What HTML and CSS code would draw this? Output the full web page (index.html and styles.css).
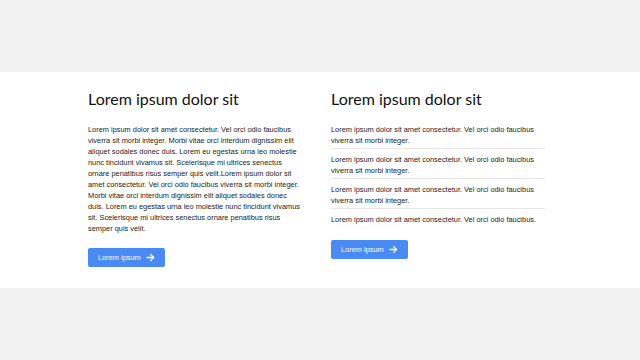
FILE: index.html
```html
<!DOCTYPE html>
<html lang="en">
<head>
  <meta charset="UTF-8">
  <meta name="viewport" content="width=device-width, initial-scale=1.0">
  <title>Lorem ipsum</title>
  <link rel="stylesheet" href="styles.css">
</head>
<body>
  <section class="band">
    <div class="columns">
      <div class="column">
        <h2>Lorem ipsum dolor sit</h2>
        <p class="text">Lorem ipsum dolor sit amet consectetur. Vel orci odio faucibus viverra sit morbi integer. Morbi vitae orci interdum dignissim elit aliquet sodales donec duis. Lorem eu egestas urna leo molestie nunc tincidunt vivamus sit. Scelerisque mi ultrices senectus ornare penatibus risus semper quis velit.Lorem ipsum dolor sit amet consectetur. Vel orci odio faucibus viverra sit morbi integer. Morbi vitae orci interdum dignissim elit aliquet sodales donec duis. Lorem eu egestas urna leo molestie nunc tincidunt vivamus sit. Scelerisque mi ultrices senectus ornare penatibus risus semper quis velit.</p>
        <a href="#" class="button">Lorem ipsum
          <svg width="9" height="9" viewBox="0 0 10 10"><path d="M1 5h7.5M5 1.5L8.5 5 5 8.5" fill="none" stroke="#fff" stroke-width="1.4" stroke-linecap="round" stroke-linejoin="round"/></svg>
        </a>
      </div>
      <div class="column">
        <h2>Lorem ipsum dolor sit</h2>
        <ul class="list">
          <li>Lorem ipsum dolor sit amet consectetur. Vel orci odio faucibus viverra sit morbi integer.</li>
          <li>Lorem ipsum dolor sit amet consectetur. Vel orci odio faucibus viverra sit morbi integer.</li>
          <li>Lorem ipsum dolor sit amet consectetur. Vel orci odio faucibus viverra sit morbi integer.</li>
          <li>Lorem ipsum dolor sit amet consectetur. Vel orci odio faucibus.</li>
        </ul>
        <a href="#" class="button">Lorem ipsum
          <svg width="9" height="9" viewBox="0 0 10 10"><path d="M1 5h7.5M5 1.5L8.5 5 5 8.5" fill="none" stroke="#fff" stroke-width="1.4" stroke-linecap="round" stroke-linejoin="round"/></svg>
        </a>
      </div>
    </div>
  </section>
</body>
</html>
```

FILE: styles.css
```css
* {
  box-sizing: border-box;
  margin: 0;
  padding: 0;
}

body {
  font-family: "Liberation Sans", Arial, sans-serif;
  background-color: #f2f2f2;
  color: #212121;
  padding-top: 72px;
}

.band {
  background-color: #fff;
  height: 216px;
  padding: 16px 0 0 88px;
}

.columns {
  display: grid;
  grid-template-columns: 213px 214px;
  column-gap: 30px;
}

h2 {
  font-family: Lato, sans-serif;
  font-size: 16px;
  font-weight: 400;
  line-height: 22px;
  color: #111;
  margin-bottom: 13.5px;
}

.text {
  font-size: 7.4px;
  line-height: 11px;
  color: #222;
  margin-bottom: 14.5px;
}

.list {
  list-style: none;
  font-size: 7.4px;
  line-height: 11px;
  color: #222;
  margin-bottom: 15px;
}

.list li {
  padding: 4.5px 0 2.5px;
  border-bottom: 1px solid #e6e6e6;
}

.list li:first-child {
  padding-top: 0;
}

.list li:last-child {
  border-bottom: none;
  padding-bottom: 0;
}

.button {
  display: flex;
  width: max-content;
  align-items: center;
  gap: 5px;
  height: 19px;
  padding: 0 10px;
  background-color: #4a8af4;
  border-radius: 2px;
  color: #fff;
  font-size: 7.4px;
  text-decoration: none;
}
```
